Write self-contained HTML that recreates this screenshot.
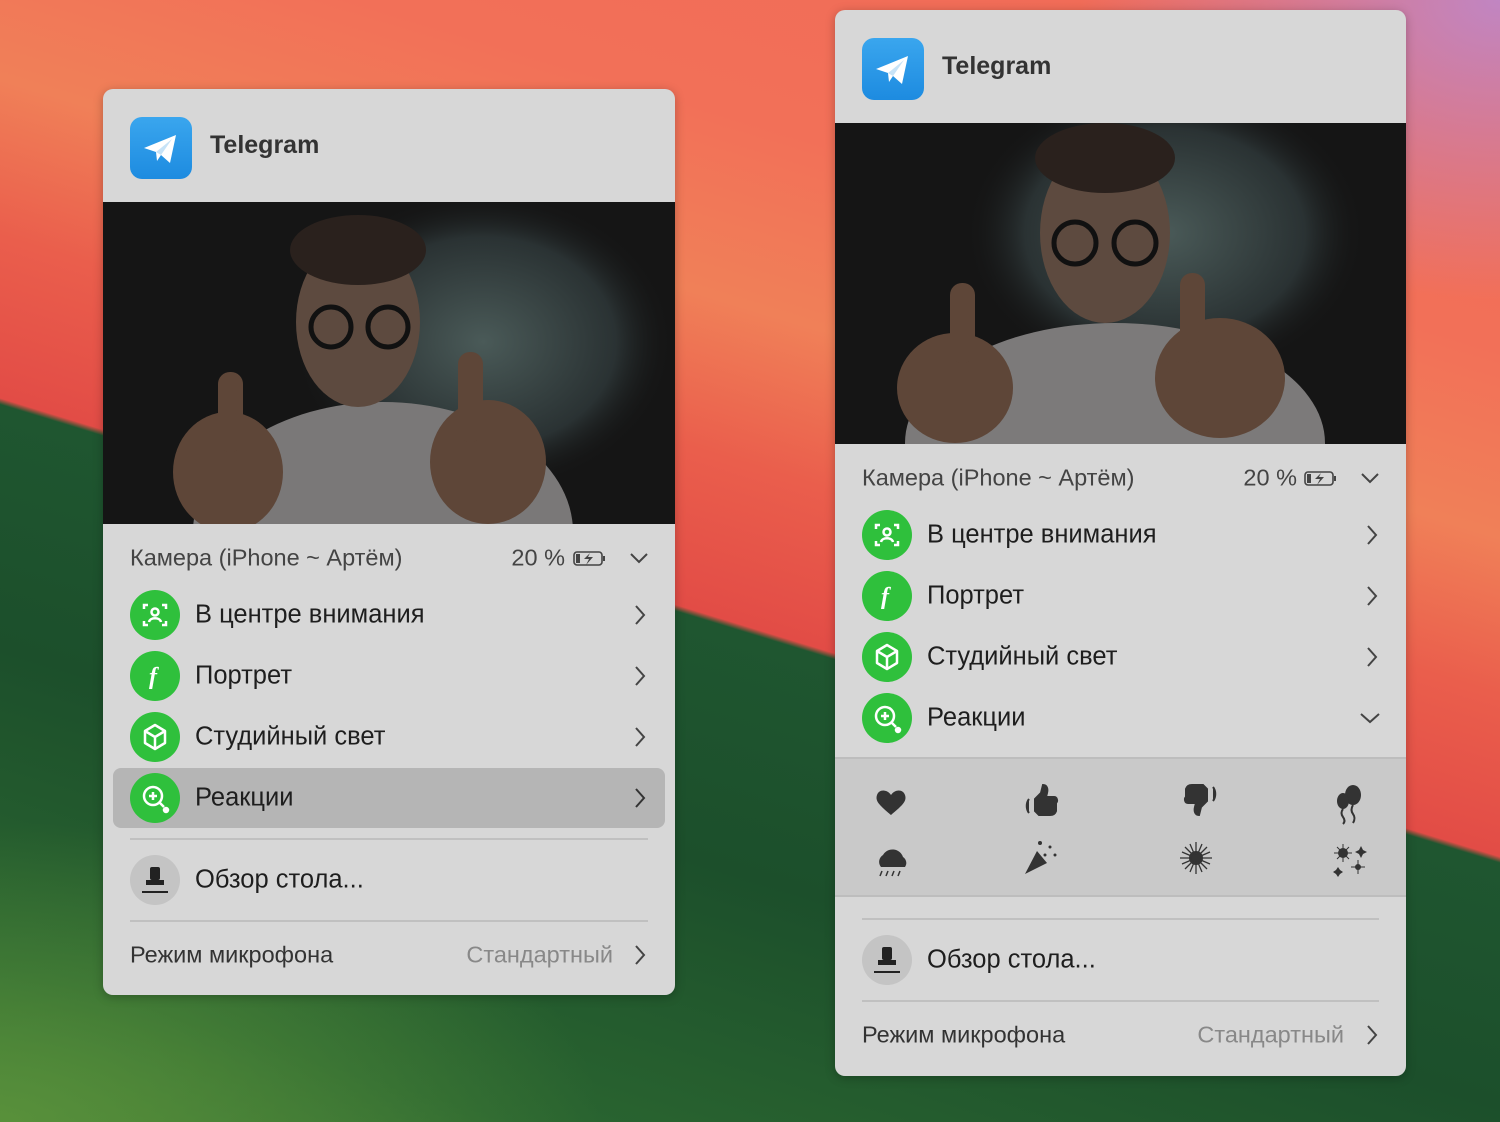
<!DOCTYPE html>
<html><head><meta charset="utf-8"><style>
*{margin:0;padding:0;box-sizing:border-box}
body{width:1500px;height:1122px;overflow:hidden;position:relative;font-family:"Liberation Sans","DejaVu Sans",sans-serif;
background:
radial-gradient(ellipse 420px 300px at 1500px 0px,rgba(190,135,200,.95),rgba(190,135,200,0) 100%),
radial-gradient(ellipse 600px 300px at 0px 1122px,rgba(95,150,60,.8),rgba(95,150,60,0) 100%),
linear-gradient(197deg,#f06a58 0%,#f27058 22%,#f08058 34%,#ea5e4c 44%,#e24c46 54.2%,#1f5630 54.6%,#1c4f2b 70%,#2a6530 90%,#3f7a35 100%);}
.p{position:absolute;background:#d7d7d7;border-radius:10px;overflow:hidden;box-shadow:0 2px 10px rgba(0,0,0,.25)}
.a{position:absolute}
.tg{left:27px;top:28px;width:62px;height:62px;border-radius:12px;background:linear-gradient(#3aa6ee,#1d8be0)}
.title{left:107px;top:42px;font-size:25px;font-weight:bold;color:#333}
.vid{left:0;width:100%;background:#151515;overflow:hidden}
.cam{left:27px;font-size:23.5px;color:#444;transform:translateY(-50%);white-space:nowrap}
.bat{font-size:23.5px;color:#444;transform:translateY(-50%)}
.ic{left:27px;width:50px;height:50px;border-radius:50%;background:#2fc03c;transform:translateY(-50%)}
.lbl{left:92px;font-size:25.5px;color:#1e1e1e;transform:translateY(-50%);white-space:nowrap}
.chev{transform:translateY(-50%)}
.sep{left:27px;right:27px;height:2px;background:#c0c0c0}
.gray{color:#888}
.r{right:62px;left:auto}
</style></head><body>

<!-- LEFT PANEL -->
<div class="p" style="left:103px;top:89px;width:572px;height:906px">
 <div class="a tg"><svg width="62" height="62"><path d="M14 31 L46 18 L40 46 L31 38 L27 44 L26 35 Z" fill="#fff"/><path d="M26 35 L42 22 L31 38Z" fill="#c7e3f7"/></svg></div>
 <div class="a title">Telegram</div>
 <div class="a vid" style="top:113px;height:322px">
  <svg width="572" height="322">
   <defs><radialGradient id="sp" cx=".5" cy=".5" r=".5"><stop offset="0" stop-color="#4a5a58"/><stop offset=".7" stop-color="#2a3233"/><stop offset="1" stop-color="#151515" stop-opacity="0"/></radialGradient></defs>
   <ellipse cx="380" cy="140" rx="190" ry="150" fill="url(#sp)"/>
   <ellipse cx="280" cy="330" rx="190" ry="130" fill="#7a7878"/>
   <ellipse cx="255" cy="120" rx="62" ry="85" fill="#5d4a3f"/>
   <ellipse cx="255" cy="48" rx="68" ry="35" fill="#2a211d"/>
   <circle cx="228" cy="125" r="20" fill="none" stroke="#111" stroke-width="5"/>
   <circle cx="285" cy="125" r="20" fill="none" stroke="#111" stroke-width="5"/>
   <ellipse cx="125" cy="270" rx="55" ry="60" fill="#5e4638"/>
   <ellipse cx="385" cy="260" rx="58" ry="62" fill="#5e4638"/>
   <rect x="115" y="170" width="25" height="80" rx="12" fill="#5e4638"/>
   <rect x="355" y="150" width="25" height="90" rx="12" fill="#5e4638"/>
  </svg>
 </div>
 <div class="a cam" style="top:469px">Камера (iPhone ~ Артём)</div>
 <div class="a bat" style="top:469px;right:110px">20 %</div>
 <svg class="a chev" style="left:470px;top:469px" width="36" height="20"><rect x="1" y="4" width="28" height="13" rx="3" fill="none" stroke="#444" stroke-width="1.6"/><rect x="30" y="8" width="2" height="5" fill="#444"/><rect x="3" y="6" width="4" height="9" fill="#444"/><path d="M17 5 L11 11 H16 L13 17 L20 9 H15Z" fill="#444"/></svg>
 <svg class="a chev" style="left:526px;top:469px" width="20" height="14"><path d="M2 3 L10 11 L18 3" fill="none" stroke="#444" stroke-width="2"/></svg>

 <div class="a" style="left:10px;right:10px;top:679px;height:60px;border-radius:8px;background:#b5b5b5"></div>

 <div class="a ic" style="top:526px"><svg width="50" height="50" fill="none" stroke="#fff" stroke-width="2.5"><path d="M14 19v-4h4M32 15h4v4M36 31v4h-4M18 35h-4v-4"/><circle cx="25" cy="22" r="3.5"/><path d="M19 32c1-5 11-5 12 0"/></svg></div>
 <div class="a lbl" style="top:526px">В центре внимания</div>
 <div class="a ic" style="top:587px"><svg width="50" height="50"><text x="19" y="33" fill="#fff" font-size="24" font-style="italic" font-weight="bold" font-family="Liberation Serif,serif">f</text></svg></div>
 <div class="a lbl" style="top:587px">Портрет</div>
 <div class="a ic" style="top:648px"><svg width="50" height="50" fill="none" stroke="#fff" stroke-width="2.5" stroke-linejoin="round"><path d="M25 13 L35 19 V31 L25 37 L15 31 V19Z M15 19 L25 25 L35 19 M25 25 V37"/></svg></div>
 <div class="a lbl" style="top:648px">Студийный свет</div>
 <div class="a ic" style="top:709px"><svg width="50" height="50" fill="none" stroke="#fff" stroke-width="2.5"><circle cx="23" cy="23" r="9"/><path d="M23 19v8M19 23h8M30 30l4 4"/><circle cx="36" cy="37" r="2" fill="#fff"/></svg></div>
 <div class="a lbl" style="top:709px">Реакции</div>
 <svg class="a chev" style="left:530px;top:526px" width="14" height="22"><path d="M3 2 L11 11 L3 20" fill="none" stroke="#444" stroke-width="2"/></svg>
 <svg class="a chev" style="left:530px;top:587px" width="14" height="22"><path d="M3 2 L11 11 L3 20" fill="none" stroke="#444" stroke-width="2"/></svg>
 <svg class="a chev" style="left:530px;top:648px" width="14" height="22"><path d="M3 2 L11 11 L3 20" fill="none" stroke="#444" stroke-width="2"/></svg>
 <svg class="a chev" style="left:530px;top:709px" width="14" height="22"><path d="M3 2 L11 11 L3 20" fill="none" stroke="#333" stroke-width="2"/></svg>

 <div class="a sep" style="top:749px"></div>
 <div class="a ic" style="top:791px;background:#c4c4c4"><svg width="50" height="50"><rect x="20" y="12" width="10" height="13" rx="2" fill="#222"/><rect x="16" y="25" width="18" height="5" fill="#222"/><rect x="12" y="36" width="26" height="2" fill="#222"/></svg></div>
 <div class="a lbl" style="top:791px">Обзор стола...</div>
 <div class="a sep" style="top:831px"></div>
 <div class="a cam" style="top:866px;color:#333">Режим микрофона</div>
 <div class="a cam gray r" style="top:866px">Стандартный</div>
 <svg class="a chev" style="left:530px;top:866px" width="14" height="22"><path d="M3 2 L11 11 L3 20" fill="none" stroke="#444" stroke-width="2"/></svg>
</div>

<!-- RIGHT PANEL -->
<div class="p" style="left:835px;top:10px;width:571px;height:1066px">
 <div class="a tg"><svg width="62" height="62"><path d="M14 31 L46 18 L40 46 L31 38 L27 44 L26 35 Z" fill="#fff"/><path d="M26 35 L42 22 L31 38Z" fill="#c7e3f7"/></svg></div>
 <div class="a title">Telegram</div>
 <div class="a vid" style="top:113px;height:321px">
  <svg width="571" height="321">
   <defs><radialGradient id="sp2" cx=".5" cy=".5" r=".5"><stop offset="0" stop-color="#4a5a58"/><stop offset=".7" stop-color="#2a3233"/><stop offset="1" stop-color="#151515" stop-opacity="0"/></radialGradient></defs>
   <ellipse cx="330" cy="110" rx="200" ry="150" fill="url(#sp2)"/>
   <ellipse cx="280" cy="320" rx="210" ry="120" fill="#7c7a7a"/>
   <ellipse cx="270" cy="110" rx="65" ry="90" fill="#5d4a3f"/>
   <ellipse cx="270" cy="35" rx="70" ry="35" fill="#2a211d"/>
   <circle cx="240" cy="120" r="21" fill="none" stroke="#111" stroke-width="5"/>
   <circle cx="300" cy="120" r="21" fill="none" stroke="#111" stroke-width="5"/>
   <ellipse cx="120" cy="265" rx="58" ry="55" fill="#5e4638"/>
   <ellipse cx="385" cy="255" rx="65" ry="60" fill="#5e4638"/>
   <rect x="115" y="160" width="25" height="80" rx="12" fill="#5e4638"/>
   <rect x="345" y="150" width="25" height="90" rx="12" fill="#5e4638"/>
  </svg>
 </div>
 <div class="a cam" style="top:468px">Камера (iPhone ~ Артём)</div>
 <div class="a bat" style="top:468px;right:109px">20 %</div>
 <svg class="a chev" style="left:469px;top:468px" width="36" height="20"><rect x="1" y="4" width="28" height="13" rx="3" fill="none" stroke="#444" stroke-width="1.6"/><rect x="30" y="8" width="2" height="5" fill="#444"/><rect x="3" y="6" width="4" height="9" fill="#444"/><path d="M17 5 L11 11 H16 L13 17 L20 9 H15Z" fill="#444"/></svg>
 <svg class="a chev" style="left:525px;top:468px" width="20" height="14"><path d="M2 3 L10 11 L18 3" fill="none" stroke="#444" stroke-width="2"/></svg>

 <div class="a ic" style="top:525px"><svg width="50" height="50" fill="none" stroke="#fff" stroke-width="2.5"><path d="M14 19v-4h4M32 15h4v4M36 31v4h-4M18 35h-4v-4"/><circle cx="25" cy="22" r="3.5"/><path d="M19 32c1-5 11-5 12 0"/></svg></div>
 <div class="a lbl" style="top:525px">В центре внимания</div>
 <div class="a ic" style="top:586px"><svg width="50" height="50"><text x="19" y="33" fill="#fff" font-size="24" font-style="italic" font-weight="bold" font-family="Liberation Serif,serif">f</text></svg></div>
 <div class="a lbl" style="top:586px">Портрет</div>
 <div class="a ic" style="top:647px"><svg width="50" height="50" fill="none" stroke="#fff" stroke-width="2.5" stroke-linejoin="round"><path d="M25 13 L35 19 V31 L25 37 L15 31 V19Z M15 19 L25 25 L35 19 M25 25 V37"/></svg></div>
 <div class="a lbl" style="top:647px">Студийный свет</div>
 <div class="a ic" style="top:708px"><svg width="50" height="50" fill="none" stroke="#fff" stroke-width="2.5"><circle cx="23" cy="23" r="9"/><path d="M23 19v8M19 23h8M30 30l4 4"/><circle cx="36" cy="37" r="2" fill="#fff"/></svg></div>
 <div class="a lbl" style="top:708px">Реакции</div>
 <svg class="a chev" style="left:530px;top:525px" width="14" height="22"><path d="M3 2 L11 11 L3 20" fill="none" stroke="#444" stroke-width="2"/></svg>
 <svg class="a chev" style="left:530px;top:586px" width="14" height="22"><path d="M3 2 L11 11 L3 20" fill="none" stroke="#444" stroke-width="2"/></svg>
 <svg class="a chev" style="left:530px;top:647px" width="14" height="22"><path d="M3 2 L11 11 L3 20" fill="none" stroke="#444" stroke-width="2"/></svg>
 <svg class="a chev" style="left:524px;top:708px" width="22" height="14"><path d="M2 3 L11 11 L20 3" fill="none" stroke="#444" stroke-width="2"/></svg>

 <div class="a" style="left:0;right:0;top:747px;height:140px;background:#c9c9c9;border-top:2px solid #bdbdbd;border-bottom:2px solid #bdbdbd">
  <svg width="571" height="140" fill="#333">
   <path d="M56 56 C44 46 40 42 42 36 C44 30 52 30 56 36 C60 30 68 30 70 36 C72 42 68 46 56 56Z"/>
   <path d="M200 52 V40 L206 34 L208 26 C212 26 213 30 212 34 L211 38 H219 C222 38 223 42 221 44 V52 C220 55 218 56 215 56 H204Z M194 40 C191 44 191 50 194 54" stroke="#333" stroke-width="2"/>
   <path d="M372 30 V42 L366 48 L364 56 C360 56 359 52 360 48 L361 44 H353 C350 44 349 40 351 38 V30 C352 27 354 26 357 26 H368Z M378 42 C381 38 381 32 378 28" stroke="#333" stroke-width="2"/>
   <ellipse cx="518" cy="36" rx="8" ry="10"/><ellipse cx="508" cy="42" rx="6" ry="8"/>
   <path d="M518 46 q-3 5 0 9 q3 4 0 9 M508 50 q-3 4 0 8 q3 4 0 7" stroke="#333" stroke-width="2" fill="none"/>
   <path d="M46 108 a8 8 0 0 1 2-12 a11 11 0 0 1 20 2 a7 7 0 0 1 2 10Z"/>
   <path d="M47 112l-2 5M53 112l-2 5M59 112l-2 5M65 112l-2 5" stroke="#333" stroke-width="1.5"/>
   <path d="M190 115 L202 92 L212 104Z"/><circle cx="205" cy="84" r="2"/><circle cx="215" cy="88" r="1.5"/><circle cx="220" cy="96" r="1.5"/><circle cx="210" cy="96" r="1.5"/>
   <circle cx="361" cy="99" r="7"/>
   <path d="M361 83v32M345 99h32M350 88l22 22M372 88l-22 22M355 85l12 28M367 85l-12 28M347 93l28 12M375 93l-28 12" stroke="#333" stroke-width="1.3"/>
   <circle cx="508" cy="94" r="5"/><path d="M508 85v18M499 94h18M502 88l12 12M514 88l-12 12" stroke="#333" stroke-width="1"/>
   <circle cx="523" cy="108" r="3"/><path d="M523 101v14M516 108h14" stroke="#333" stroke-width="1"/>
   <path d="M526 87l2 4 4 2-4 2-2 4-2-4-4-2 4-2Z M503 108l2 3 3 2-3 2-2 3-2-3-3-2 3-2Z"/>
  </svg>
 </div>

 <div class="a sep" style="top:908px"></div>
 <div class="a ic" style="top:950px;background:#c4c4c4"><svg width="50" height="50"><rect x="20" y="12" width="10" height="13" rx="2" fill="#222"/><rect x="16" y="25" width="18" height="5" fill="#222"/><rect x="12" y="36" width="26" height="2" fill="#222"/></svg></div>
 <div class="a lbl" style="top:950px">Обзор стола...</div>
 <div class="a sep" style="top:990px"></div>
 <div class="a cam" style="top:1025px;color:#333">Режим микрофона</div>
 <div class="a cam gray r" style="top:1025px">Стандартный</div>
 <svg class="a chev" style="left:530px;top:1025px" width="14" height="22"><path d="M3 2 L11 11 L3 20" fill="none" stroke="#444" stroke-width="2"/></svg>
</div>
</body></html>
